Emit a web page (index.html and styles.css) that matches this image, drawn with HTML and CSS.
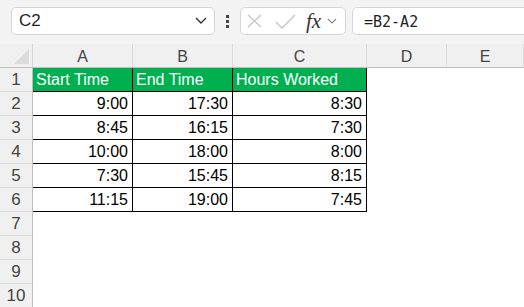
FILE: index.html
```html
<!DOCTYPE html>
<html lang="en">
  <head>
    <meta charset="UTF-8" />
    <title>Hours Worked</title>
    <link rel="stylesheet" href="styles.css">
  </head>
  <body>
    <div class="toolbar">
      <div class="name-box">
        <span>C2</span>
        <svg width="12" height="8" viewBox="0 0 12 8"><polyline points="1,1 6,6 11,1" fill="none" stroke="#333" stroke-width="1.4"/></svg>
      </div>
      <div class="dots"><i></i><i></i><i></i></div>
      <div class="fn-box">
        <svg class="ico-x" width="15" height="14" viewBox="0 0 15 14"><path d="M1 1 L14 13 M14 1 L1 13" stroke="#c4c4c4" stroke-width="1.3" fill="none"/></svg>
        <svg class="ico-check" width="21" height="15" viewBox="0 0 21 15"><polyline points="1,8 7,14 20,1" fill="none" stroke="#c4c4c4" stroke-width="1.3"/></svg>
        <span class="fx">fx</span>
        <svg width="10" height="6" viewBox="0 0 10 6"><polyline points="1,1 5,5 9,1" fill="none" stroke="#8a8a8a" stroke-width="1.2"/></svg>
      </div>
      <div class="formula">=B2-A2</div>
    </div>

    <div class="sheet">
      <div class="corner"><span></span></div>
      <div class="col-head">A</div>
      <div class="col-head">B</div>
      <div class="col-head">C</div>
      <div class="col-head">D</div>
      <div class="col-head">E</div>

      <div class="row-head">1</div>
      <div class="cell title">Start Time</div>
      <div class="cell title">End Time</div>
      <div class="cell title">Hours Worked</div>
      <div class="blank"></div><div class="blank"></div>

      <div class="row-head">2</div>
      <div class="cell">9:00</div><div class="cell">17:30</div><div class="cell">8:30</div>
      <div class="blank"></div><div class="blank"></div>

      <div class="row-head">3</div>
      <div class="cell">8:45</div><div class="cell">16:15</div><div class="cell">7:30</div>
      <div class="blank"></div><div class="blank"></div>

      <div class="row-head">4</div>
      <div class="cell">10:00</div><div class="cell">18:00</div><div class="cell">8:00</div>
      <div class="blank"></div><div class="blank"></div>

      <div class="row-head">5</div>
      <div class="cell">7:30</div><div class="cell">15:45</div><div class="cell">8:15</div>
      <div class="blank"></div><div class="blank"></div>

      <div class="row-head">6</div>
      <div class="cell">11:15</div><div class="cell">19:00</div><div class="cell">7:45</div>
      <div class="blank"></div><div class="blank"></div>

      <div class="row-head">7</div><div class="blank wide"></div>
      <div class="row-head">8</div><div class="blank wide"></div>
      <div class="row-head">9</div><div class="blank wide"></div>
      <div class="row-head">10</div><div class="blank wide"></div>
    </div>
  </body>
</html>
```

FILE: styles.css
```css
body {
  margin: 0;
  overflow: hidden;
  background: white;
  font-family: "Liberation Sans", Arial, sans-serif;
}
.toolbar {
  display: flex;
  align-items: flex-start;
  height: 44px;
  padding: 7px 0 0 11px;
  box-sizing: border-box;
  background: #f3f3f3;
  overflow: hidden;
}
.toolbar > * {
  flex-shrink: 0;
}
.name-box {
  display: flex;
  align-items: center;
  justify-content: space-between;
  width: 204px;
  height: 28px;
  box-sizing: border-box;
  padding: 0 7px 0 7px;
  background: white;
  border: 1px solid #d6d6d6;
  border-radius: 5px;
  font-size: 17px;
  color: #1f1f1f;
}
.dots {
  display: flex;
  flex-direction: column;
  gap: 2px;
  margin: 8px 11px 0 11px;
}
.dots i {
  display: block;
  width: 3px;
  height: 3px;
  background: #444;
}
.fn-box {
  display: flex;
  align-items: center;
  width: 106px;
  height: 28px;
  box-sizing: border-box;
  padding-left: 6px;
  background: white;
  border: 1px solid #d6d6d6;
  border-radius: 5px;
}
.ico-check {
  margin-left: 13px;
}
.fx {
  margin-left: 10px;
  margin-right: 6px;
  font-family: "Liberation Serif", "Times New Roman", serif;
  font-style: italic;
  font-size: 21px;
  color: #333;
  line-height: 1;
}
.formula {
  width: 220px;
  height: 28px;
  margin-left: 6px;
  box-sizing: border-box;
  padding: 5px 0 0 11px;
  background: white;
  border: 1px solid #d6d6d6;
  border-radius: 5px;
  font-family: "DejaVu Sans Mono", monospace;
  font-size: 15px;
  color: #1f1f1f;
}
.sheet {
  display: grid;
  grid-template-columns: 33px 100px 100px 134px 80px 77px;
  grid-template-rows: 24px repeat(10, 24px);
  font-size: 16px;
}
.corner {
  position: relative;
  background: #f0f0f0;
  border-right: 1px solid #d6d6d6;
  border-bottom: 1px solid #bdbdbd;
}
.corner span {
  position: absolute;
  right: 3px;
  bottom: 3px;
  width: 0;
  height: 0;
  border-left: 15px solid transparent;
  border-bottom: 15px solid #dcdcdc;
}
.col-head {
  display: flex;
  align-items: center;
  justify-content: center;
  background: #f0f0f0;
  color: #444;
  border-right: 1px solid #dcdcdc;
  border-bottom: 1px solid #bdbdbd;
  padding-top: 2px;
}
.row-head {
  display: flex;
  align-items: center;
  justify-content: center;
  background: #f0f0f0;
  color: #444;
  font-size: 17px;
  border-right: 1px solid #bdbdbd;
  border-bottom: 1px solid #dcdcdc;
}
.cell {
  display: flex;
  align-items: center;
  justify-content: flex-end;
  padding: 1px 4px 0 0;
  border-right: 1px solid #000;
  border-bottom: 1px solid #000;
  color: #000;
}
.cell.title {
  justify-content: flex-start;
  padding: 1px 0 0 3px;
  background: #00b050;
  color: white;
}
.blank {
  background: white;
}
.blank.wide {
  grid-column: span 5;
}
```
